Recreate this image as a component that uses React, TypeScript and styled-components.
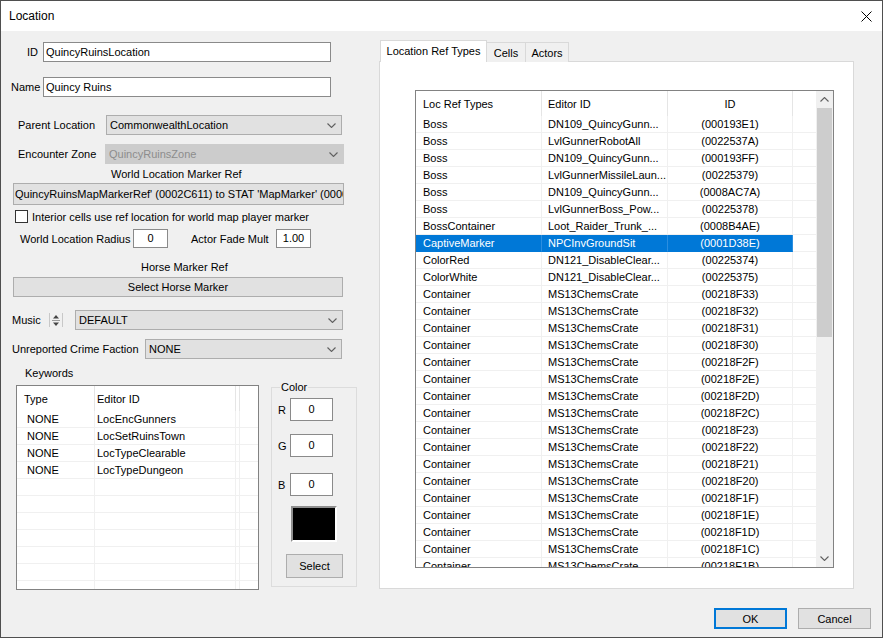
import React from 'react'
import styled, { createGlobalStyle } from 'styled-components'

type RefRow = [string, string, string]

const refRows: RefRow[] = [
  ['Boss', 'DN109_QuincyGunn...', '(000193E1)'],
  ['Boss', 'LvlGunnerRobotAll', '(0022537A)'],
  ['Boss', 'DN109_QuincyGunn...', '(000193FF)'],
  ['Boss', 'LvlGunnerMissileLaun...', '(00225379)'],
  ['Boss', 'DN109_QuincyGunn...', '(0008AC7A)'],
  ['Boss', 'LvlGunnerBoss_Pow...', '(00225378)'],
  ['BossContainer', 'Loot_Raider_Trunk_...', '(0008B4AE)'],
  ['CaptiveMarker', 'NPCInvGroundSit', '(0001D38E)'],
  ['ColorRed', 'DN121_DisableClear...', '(00225374)'],
  ['ColorWhite', 'DN121_DisableClear...', '(00225375)'],
  ...['33', '32', '31', '30', '2F', '2E', '2D', '2C', '23', '22', '21', '20', '1F', '1E', '1D', '1C', '1B'].map(
    (s): RefRow => ['Container', 'MS13ChemsCrate', `(00218F${s})`]
  ),
]

const keywords = ['LocEncGunners', 'LocSetRuinsTown', 'LocTypeClearable', 'LocTypeDungeon']

const SELECTED = 7

const GlobalStyle = createGlobalStyle`
  html, body { margin: 0; padding: 0; background: #f0f0f0; }
  body { font-family: "Liberation Sans", Arial, sans-serif; font-size: 11px; color: #000; }
  * { box-sizing: border-box; }
`

const Chevron = ({ up }: { up?: boolean }) => (
  <svg width="9" height="5" viewBox="0 0 9 5">
    <path d={up ? 'M0.5 4.5 L4.5 0.5 L8.5 4.5' : 'M0.5 0.5 L4.5 4.5 L8.5 0.5'} stroke="#606060" strokeWidth="1.1" fill="none" />
  </svg>
)

const Spinner = () => (
  <svg width="14" height="16" viewBox="0 0 14 16">
    <line x1="0.5" y1="1" x2="0.5" y2="15" stroke="#c8c8c8" />
    <line x1="13.5" y1="1" x2="13.5" y2="15" stroke="#c8c8c8" />
    <path d="M4 6.5 L7 3 L10 6.5 Z" fill="#444" />
    <line x1="3" y1="8.5" x2="11" y2="8.5" stroke="#9a9a9a" />
    <path d="M4 10.5 L7 14 L10 10.5 Z" fill="#444" />
  </svg>
)

const App = () => {
  return (
    <>
      <GlobalStyle />
      <Window>
        <TitleBar>
          <span>Location</span>
          <svg width="11" height="11" viewBox="0 0 11 11">
            <path d="M0.5 0.5 L10.5 10.5 M10.5 0.5 L0.5 10.5" stroke="#000" strokeWidth="1" />
          </svg>
        </TitleBar>
        <Main>
          <LeftPanel>
            <Row $mt={11}>
              <Label $w={37} $right>ID</Label>
              <Gap $w={5} />
              <TextBox $w={288}>QuincyRuinsLocation</TextBox>
            </Row>
            <Row $mt={15} $pl={10}>
              <Label $w={32}>Name</Label>
              <TextBox $w={288}>Quincy Ruins</TextBox>
            </Row>
            <Row $mt={18} $pl={17}>
              <Label $w={88}>Parent Location</Label>
              <Combo $w={236}>
                <span>CommonwealthLocation</span>
                <Chevron />
              </Combo>
            </Row>
            <Row $mt={9} $pl={17}>
              <Label $w={87}>Encounter Zone</Label>
              <Combo $w={239} $disabled>
                <span>QuincyRuinsZone</span>
                <Chevron />
              </Combo>
            </Row>
            <Row $mt={3} $pl={110} $h={14}>
              <Label>World Location Marker Ref</Label>
            </Row>
            <Row $mt={2} $pl={12} $h={22}>
              <MarkerField>QuincyRuinsMapMarkerRef' (0002C611) to STAT 'MapMarker' (00000015)</MarkerField>
            </Row>
            <Row $mt={4} $pl={14} $h={15}>
              <CheckBox />
              <Gap $w={4} />
              <Label>Interior cells use ref location for world map player marker</Label>
            </Row>
            <Row $mt={5} $pl={19} $h={19}>
              <Label $w={113}>World Location Radius</Label>
              <TextBox $w={35} $h={19} $center>0</TextBox>
              <Gap $w={23} />
              <Label $w={85}>Actor Fade Mult</Label>
              <TextBox $w={35} $h={19} $center>1.00</TextBox>
            </Row>
            <Row $mt={12} $pl={140} $h={14}>
              <Label>Horse Marker Ref</Label>
            </Row>
            <Row $mt={3} $pl={12}>
              <Button $w={330}>Select Horse Marker</Button>
            </Row>
            <Row $mt={13} $pl={11}>
              <Label $w={37}>Music</Label>
              <Spinner />
              <Gap $w={12} />
              <Combo $w={268}>
                <span>DEFAULT</span>
                <Chevron />
              </Combo>
            </Row>
            <Row $mt={9} $pl={11}>
              <Label $w={133}>Unreported Crime Faction</Label>
              <Combo $w={197}>
                <span>NONE</span>
                <Chevron />
              </Combo>
            </Row>
            <Bottom>
              <KeywordsCol>
                <Row $mt={0} $pl={9} $h={14}>
                  <Label>Keywords</Label>
                </Row>
                <ListBox $w={243} $h={205} $mt={5}>
                  <Grid>
                    <HeaderRow>
                      <HeadCell $w={78} $pad={7}>Type</HeadCell>
                      <HeadCell $w={141} $pad={2}>Editor ID</HeadCell>
                      <HeadCell $w={4} $pad={0} />
                      <HeadCell $w={18} $pad={0} $last />
                    </HeaderRow>
                    {Array.from({ length: 11 }).map((_, i) => (
                      <DataRow key={i}>
                        <Cell $w={78} $pad={10}>{keywords[i] ? 'NONE' : ''}</Cell>
                        <Cell $w={141} $pad={2}>{keywords[i] ?? ''}</Cell>
                        <Cell $w={4} $pad={0} />
                        <Cell $w={18} $pad={0} $last />
                      </DataRow>
                    ))}
                  </Grid>
                </ListBox>
              </KeywordsCol>
              <ColorGroup>
                <Legend>Color</Legend>
                <ColorRow $mt={0}>
                  <Label $w={12}>R</Label>
                  <TextBox $w={43} $h={23} $center>0</TextBox>
                </ColorRow>
                <ColorRow $mt={13}>
                  <Label $w={12}>G</Label>
                  <TextBox $w={43} $h={23} $center>0</TextBox>
                </ColorRow>
                <ColorRow $mt={16}>
                  <Label $w={12}>B</Label>
                  <TextBox $w={43} $h={23} $center>0</TextBox>
                </ColorRow>
                <Swatch />
                <SelectWrap>
                  <Button $w={57} $h={24}>Select</Button>
                </SelectWrap>
              </ColorGroup>
            </Bottom>
          </LeftPanel>

          <RightPanel>
            <TabStrip>
              <Tab $w={107} $active>Location Ref Types</Tab>
              <Tab $w={40}>Cells</Tab>
              <Tab $w={44}>Actors</Tab>
            </TabStrip>
            <Pane>
              <ListBox $w={419} $h={478} $mt={0}>
                <Grid>
                  <HeaderRow>
                    <HeadCell $w={126} $pad={7}>Loc Ref Types</HeadCell>
                    <HeadCell $w={126} $pad={6}>Editor ID</HeadCell>
                    <HeadCell $w={125} $pad={0} $center>ID</HeadCell>
                    <HeadCell $w={23} $pad={0} $last />
                  </HeaderRow>
                  {refRows.map((r, i) => (
                    <DataRow key={i}>
                      <Cell $w={126} $pad={7} $sel={i === SELECTED}>{r[0]}</Cell>
                      <Cell $w={126} $pad={6} $sel={i === SELECTED}>{r[1]}</Cell>
                      <Cell $w={125} $pad={0} $center $sel={i === SELECTED}>{r[2]}</Cell>
                      <Cell $w={23} $pad={0} $last />
                    </DataRow>
                  ))}
                </Grid>
                <ScrollBar>
                  <ScrollBtn><Chevron up /></ScrollBtn>
                  <Thumb />
                  <Track />
                  <ScrollBtn><Chevron /></ScrollBtn>
                </ScrollBar>
              </ListBox>
            </Pane>
          </RightPanel>
        </Main>
        <Footer>
          <Button $w={73} $h={21} $default>OK</Button>
          <Button $w={73} $h={21}>Cancel</Button>
        </Footer>
      </Window>
    </>
  )
}

export default App

const Window = styled.div`
  width: 883px;
  height: 638px;
  border: 1px solid #4f4f4f;
  background: #f0f0f0;
  display: flex;
  flex-direction: column;
  overflow: hidden;
`

const TitleBar = styled.div`
  height: 30px;
  flex: none;
  background: #fff;
  display: flex;
  align-items: center;
  justify-content: space-between;
  padding: 0 10px 0 8px;
  font-size: 12px;
`

const Main = styled.div`
  display: flex;
  height: 559px;
  flex: none;
`

const LeftPanel = styled.div`
  width: 378px;
  flex: none;
  display: flex;
  flex-direction: column;
`

const Row = styled.div<{ $mt: number; $pl?: number; $h?: number }>`
  display: flex;
  align-items: center;
  flex: none;
  margin-top: ${p => p.$mt}px;
  padding-left: ${p => p.$pl ?? 0}px;
  height: ${p => p.$h ?? 20}px;
`

const Gap = styled.span<{ $w: number }>`
  width: ${p => p.$w}px;
  flex: none;
`

const Label = styled.span<{ $w?: number; $right?: boolean }>`
  flex: none;
  white-space: nowrap;
  width: ${p => (p.$w ? `${p.$w}px` : 'auto')};
  text-align: ${p => (p.$right ? 'right' : 'left')};
`

const TextBox = styled.div<{ $w: number; $h?: number; $center?: boolean }>`
  width: ${p => p.$w}px;
  height: ${p => p.$h ?? 20}px;
  flex: none;
  background: #fff;
  border: 1px solid #8a8a8a;
  display: flex;
  align-items: center;
  justify-content: ${p => (p.$center ? 'center' : 'flex-start')};
  padding: 0 2px 1px;
  white-space: nowrap;
  overflow: hidden;
`

const Combo = styled.div<{ $w: number; $disabled?: boolean }>`
  width: ${p => p.$w}px;
  height: 20px;
  flex: none;
  display: flex;
  align-items: center;
  justify-content: space-between;
  padding: 0 5px 0 3px;
  background: ${p => (p.$disabled ? '#cccccc' : '#e1e1e1')};
  border: 1px solid ${p => (p.$disabled ? '#cccccc' : '#adadad')};
  color: ${p => (p.$disabled ? '#8d8d8d' : '#000')};
  white-space: nowrap;
`

const MarkerField = styled.div`
  width: 331px;
  height: 22px;
  background: #e1e1e1;
  border: 1px solid #adadad;
  display: flex;
  align-items: center;
  padding-left: 1px;
  white-space: nowrap;
  overflow: hidden;
`

const CheckBox = styled.span`
  width: 13px;
  height: 13px;
  flex: none;
  border: 1px solid #333;
  background: #fff;
`

const Button = styled.div<{ $w: number; $h?: number; $default?: boolean }>`
  width: ${p => p.$w}px;
  height: ${p => p.$h ?? 20}px;
  flex: none;
  display: flex;
  align-items: center;
  justify-content: center;
  background: #e1e1e1;
  border: 1px solid ${p => (p.$default ? '#0078d7' : '#adadad')};
  box-shadow: ${p => (p.$default ? 'inset 0 0 0 1px #0078d7' : 'none')};
`

const Bottom = styled.div`
  display: flex;
  margin-top: 7px;
`

const KeywordsCol = styled.div`
  margin-left: 15px;
  width: 243px;
  display: flex;
  flex-direction: column;
`

const ListBox = styled.div<{ $w: number; $h: number; $mt: number }>`
  width: ${p => p.$w}px;
  height: ${p => p.$h}px;
  margin-top: ${p => p.$mt}px;
  flex: none;
  border: 1px solid #828282;
  background: #fff;
  display: flex;
  overflow: hidden;
`

const Grid = styled.div`
  flex: 1;
  display: flex;
  flex-direction: column;
  overflow: hidden;
`

const HeaderRow = styled.div`
  display: flex;
  height: 25px;
  flex: none;
`

const HeadCell = styled.div<{ $w: number; $pad: number; $center?: boolean; $last?: boolean }>`
  width: ${p => p.$w}px;
  flex: none;
  display: flex;
  align-items: center;
  justify-content: ${p => (p.$center ? 'center' : 'flex-start')};
  padding-left: ${p => p.$pad}px;
  border-right: ${p => (p.$last ? 'none' : '1px solid #e5e5e5')};
  white-space: nowrap;
`

const DataRow = styled.div`
  display: flex;
  height: 17px;
  flex: none;
`

const Cell = styled.div<{ $w: number; $pad: number; $center?: boolean; $last?: boolean; $sel?: boolean }>`
  width: ${p => p.$w}px;
  flex: none;
  display: flex;
  align-items: center;
  justify-content: ${p => (p.$center ? 'center' : 'flex-start')};
  padding-left: ${p => p.$pad}px;
  border-right: ${p => (p.$last ? 'none' : `1px solid ${p.$sel ? '#2b8ee0' : '#f0f0f0'}`)};
  border-bottom: 1px solid ${p => (p.$sel ? '#0078d7' : '#f0f0f0')};
  background: ${p => (p.$sel ? '#0078d7' : 'transparent')};
  color: ${p => (p.$sel ? '#fff' : '#000')};
  white-space: nowrap;
  overflow: hidden;
`

const ColorGroup = styled.fieldset`
  margin: 14px 0 0 12px;
  width: 86px;
  height: 207px;
  flex: none;
  border: 1px solid #dcdcdc;
  padding: 4px 0 0 6px;
  display: flex;
  flex-direction: column;
`

const Legend = styled.legend`
  padding: 0 1px;
  margin-left: 2px;
  line-height: 14px;
  font-size: 11px;
`

const ColorRow = styled.div<{ $mt: number }>`
  display: flex;
  align-items: center;
  height: 23px;
  flex: none;
  margin-top: ${p => p.$mt}px;
`

const Swatch = styled.div`
  width: 46px;
  height: 36px;
  flex: none;
  margin: 10px 0 0 13px;
  background: #000;
  border: 2px solid;
  border-color: #8f8f8f #ffffff #ffffff #8f8f8f;
`

const SelectWrap = styled.div`
  margin: 12px 0 0 8px;
  display: flex;
`

const RightPanel = styled.div`
  width: 475px;
  flex: none;
  display: flex;
  flex-direction: column;
  padding-top: 9px;
`

const TabStrip = styled.div`
  display: flex;
  align-items: flex-end;
  height: 22px;
  flex: none;
  padding-left: 1px;
  margin-bottom: -1px;
`

const Tab = styled.div<{ $w: number; $active?: boolean }>`
  width: ${p => p.$w}px;
  height: ${p => (p.$active ? 22 : 20)}px;
  flex: none;
  position: relative;
  z-index: ${p => (p.$active ? 1 : 0)};
  display: flex;
  align-items: center;
  justify-content: center;
  padding-bottom: ${p => (p.$active ? 1 : 0)}px;
  background: ${p => (p.$active ? '#fff' : '#f0f0f0')};
  border: 1px solid #d9d9d9;
  border-bottom: none;
  margin-left: ${p => (p.$active ? 0 : -1)}px;
  white-space: nowrap;
`

const Pane = styled.div`
  width: 475px;
  height: 528px;
  flex: none;
  background: #fff;
  border: 1px solid #d9d9d9;
  padding: 28px 0 0 35px;
`

const ScrollBar = styled.div`
  width: 17px;
  flex: none;
  background: #f0f0f0;
  display: flex;
  flex-direction: column;
  align-items: center;
`

const ScrollBtn = styled.div`
  width: 17px;
  height: 17px;
  flex: none;
  display: flex;
  align-items: center;
  justify-content: center;
`

const Thumb = styled.div`
  width: 15px;
  height: 229px;
  flex: none;
  background: #cdcdcd;
`

const Track = styled.div`
  flex: 1;
`

const Footer = styled.div`
  display: flex;
  justify-content: flex-end;
  gap: 11px;
  margin-top: 18px;
  padding-right: 11px;
`
